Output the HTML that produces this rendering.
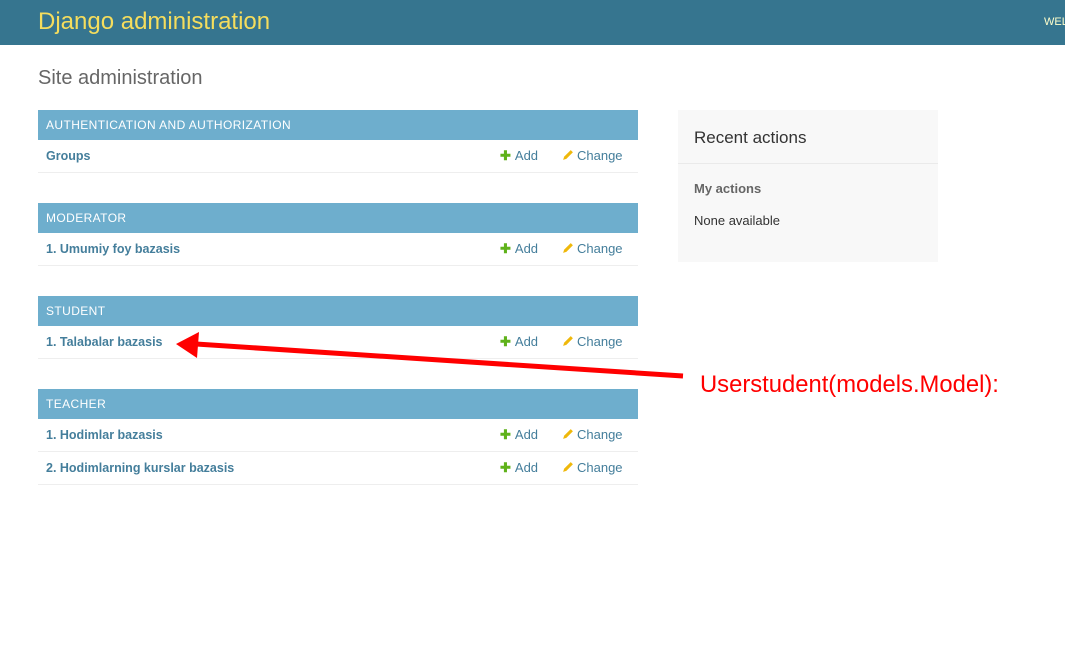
<!DOCTYPE html>
<html><head><meta charset="utf-8"><style>
*{margin:0;padding:0;box-sizing:border-box}
body{width:1065px;height:654px;background:#fff;font-family:"Liberation Sans",sans-serif;position:relative;overflow:hidden;color:#333}
#hdr{position:absolute;left:0;top:0;width:1065px;height:45px;background:#36758f}
#hdr .t{position:absolute;left:38px;top:8px;font-size:24px;color:#f5dd5d}
#hdr .w{position:absolute;left:1044px;top:16px;font-size:11px;color:#ffc}
h1{position:absolute;left:38px;top:67px;font-size:20px;font-weight:300;color:#666}
.m{position:absolute;left:38px;width:600px}
.cap{height:30px;background:#6eaecd;color:#fff;font-size:12px;letter-spacing:.4px;padding:8px 8px 0}
.row{height:33px;border-bottom:1px solid #eee;position:relative;font-size:13px;white-space:nowrap}
.row .n{position:absolute;left:8px;top:9px;font-weight:bold;color:#447e9b;font-size:12.5px}
.row .a{position:absolute;left:462px;top:8px;color:#447e9b}
.row .c{position:absolute;left:524px;top:8px;color:#447e9b}
.plus{color:#5fb21a;font-weight:bold;margin-right:4px}
.pen{display:inline-block;width:12px;height:12px;margin-right:3px;vertical-align:-1px}
#ra{position:absolute;left:678px;top:110px;width:260px;height:152px;background:#f8f8f8}
#ra h2{font-size:17px;font-weight:normal;padding:18px 16px 0;height:54px;border-bottom:1px solid #eaeaea;color:#333}
#ra h3{font-size:13px;font-weight:bold;color:#666;padding:17px 16px 0}
#ra p{font-size:13px;padding:17px 16px 0;color:#333}
#note{position:absolute;left:700px;top:371px;font-size:23.8px;color:#f00;white-space:nowrap}
</style></head><body>
<div id="hdr"><div class="t">Django administration</div><div class="w">WEL</div></div>
<h1>Site administration</h1>
<div class="m" style="top:110px"><div class="cap">AUTHENTICATION AND AUTHORIZATION</div>
<div class="row"><span class="n">Groups</span><span class="a"><span class="plus">✚</span>Add</span><span class="c"><svg class="pen" viewBox="0 0 11 11"><path d="M1 10 L2 7 L8 1 L10 3 L4 9 Z" fill="#efb80b"/></svg>Change</span></div></div>
<div class="m" style="top:203px"><div class="cap">MODERATOR</div>
<div class="row"><span class="n">1. Umumiy foy bazasis</span><span class="a"><span class="plus">✚</span>Add</span><span class="c"><svg class="pen" viewBox="0 0 11 11"><path d="M1 10 L2 7 L8 1 L10 3 L4 9 Z" fill="#efb80b"/></svg>Change</span></div></div>
<div class="m" style="top:296px"><div class="cap">STUDENT</div>
<div class="row"><span class="n">1. Talabalar bazasis</span><span class="a"><span class="plus">✚</span>Add</span><span class="c"><svg class="pen" viewBox="0 0 11 11"><path d="M1 10 L2 7 L8 1 L10 3 L4 9 Z" fill="#efb80b"/></svg>Change</span></div></div>
<div class="m" style="top:389px"><div class="cap">TEACHER</div>
<div class="row"><span class="n">1. Hodimlar bazasis</span><span class="a"><span class="plus">✚</span>Add</span><span class="c"><svg class="pen" viewBox="0 0 11 11"><path d="M1 10 L2 7 L8 1 L10 3 L4 9 Z" fill="#efb80b"/></svg>Change</span></div>
<div class="row"><span class="n">2. Hodimlarning kurslar bazasis</span><span class="a"><span class="plus">✚</span>Add</span><span class="c"><svg class="pen" viewBox="0 0 11 11"><path d="M1 10 L2 7 L8 1 L10 3 L4 9 Z" fill="#efb80b"/></svg>Change</span></div></div>
<div id="ra"><h2>Recent actions</h2><h3>My actions</h3><p>None available</p></div>
<svg style="position:absolute;left:0;top:0" width="1065" height="654">
<line x1="683" y1="376" x2="196" y2="344" stroke="#f00" stroke-width="5"/>
<polygon points="176,344 199,332 197,358" fill="#f00"/>
</svg>
<div id="note">Userstudent(models.Model):</div>
</body></html>
